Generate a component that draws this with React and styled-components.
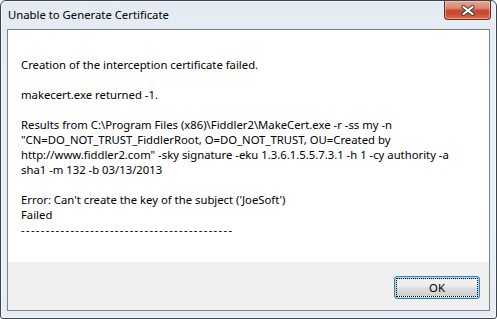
import React from 'react';
import styled, { createGlobalStyle } from 'styled-components';

const GlobalStyle = createGlobalStyle`
  html, body {
    margin: 0;
    padding: 0;
    background: #ffffff;
  }
  * {
    box-sizing: border-box;
  }
`;

const lines = [
  'Creation of the interception certificate failed.',
  '',
  'makecert.exe returned -1.',
  '',
  'Results from C:\\Program Files (x86)\\Fiddler2\\MakeCert.exe -r -ss my -n',
  '"CN=DO_NOT_TRUST_FiddlerRoot, O=DO_NOT_TRUST, OU=Created by',
  'http://www.fiddler2.com" -sky signature -eku 1.3.6.1.5.5.7.3.1 -h 1 -cy authority -a',
  'sha1 -m 132 -b 03/13/2013',
  '',
  "Error: Can't create the key of the subject ('JoeSoft')",
  'Failed',
  '-------------------------------------------',
];

function App() {
  return (
    <>
      <GlobalStyle />
      <Window>
        <TitleBar>
          <Title>Unable to Generate Certificate</Title>
          <CloseButton aria-label="Close">
            <svg width="16" height="11" viewBox="0 0 16 11">
              <path
                d="M3.5 2 L12.5 9 M12.5 2 L3.5 9"
                stroke="#3b3b3b"
                strokeWidth="4"
                strokeLinecap="round"
                fill="none"
              />
              <path
                d="M3.5 2 L12.5 9 M12.5 2 L3.5 9"
                stroke="#ffffff"
                strokeWidth="2.2"
                strokeLinecap="round"
                fill="none"
              />
            </svg>
          </CloseButton>
        </TitleBar>
        <Client>
          <Message>
            {lines.map((line, i) => (
              <Line key={i} $dashes={line.startsWith('---')}>
                {line || '\u00a0'}
              </Line>
            ))}
          </Message>
          <ButtonBar>
            <OkButton>
              <FocusRect>OK</FocusRect>
            </OkButton>
          </ButtonBar>
        </Client>
      </Window>
    </>
  );
}

export default App;

const Window = styled.div`
  width: 497px;
  height: 319px;
  display: flex;
  flex-direction: column;
  border: 1px solid #3c434b;
  border-radius: 6px 6px 3px 3px;
  background: linear-gradient(180deg, #e4ebf3 0%, #eaf0f6 40%, #e6edf5 100%);
  box-shadow: inset 0 0 0 1px #f7fafd;
  padding: 0 6px 7px 6px;
  font-family: 'Segoe UI', 'Noto Sans', 'Liberation Sans', sans-serif;
`;

const TitleBar = styled.div`
  height: 28px;
  display: flex;
  align-items: flex-start;
  justify-content: space-between;
  flex-shrink: 0;
`;

const Title = styled.span`
  font-size: 11.3px;
  color: #000;
  margin: 6px 0 0 1px;
  line-height: 16px;
`;

const CloseButton = styled.div`
  width: 47px;
  height: 19px;
  margin-right: -1px;
  display: flex;
  align-items: center;
  justify-content: center;
  border: 1px solid #6b2a20;
  border-top: none;
  border-radius: 0 0 4px 4px;
  background: linear-gradient(
    180deg,
    #e9a796 0%,
    #db8670 40%,
    #c84a32 52%,
    #c84a32 70%,
    #d9704f 100%
  );
  box-shadow: inset 0 0 0 1px rgba(255, 220, 210, 0.45);
`;

const Client = styled.div`
  flex: 1;
  display: flex;
  flex-direction: column;
  border: 1px solid #7f8388;
  background: #f0f0f0;
`;

const Message = styled.div`
  height: 232px;
  background: #ffffff;
  padding: 27px 13px 0 13px;
`;

const Line = styled.div`
  font-size: 11.3px;
  line-height: 15px;
  color: #000;
  white-space: pre;
  letter-spacing: ${(props) => (props.$dashes ? '1.3px' : '0')};
`;

const ButtonBar = styled.div`
  flex: 1;
  display: flex;
  justify-content: flex-end;
  align-items: flex-start;
  padding: 14px 9px 0 0;
`;

const OkButton = styled.div`
  width: 86px;
  height: 23px;
  border: 1px solid #3c7fb1;
  border-radius: 3px;
  padding: 1px;
  background: linear-gradient(180deg, #eaf6fd 0%, #d9f0fc 49%, #bee6fd 51%, #a7d9f5 100%);
  box-shadow: inset 0 0 0 1px #9fe0ff;
  display: flex;
`;

const FocusRect = styled.div`
  flex: 1;
  display: flex;
  align-items: center;
  justify-content: center;
  border: 1px dotted #000;
  background: linear-gradient(180deg, #f2f2f2 0%, #ebebeb 48%, #dddddd 52%, #cfcfcf 100%);
  font-size: 11.3px;
  color: #000;
`;
